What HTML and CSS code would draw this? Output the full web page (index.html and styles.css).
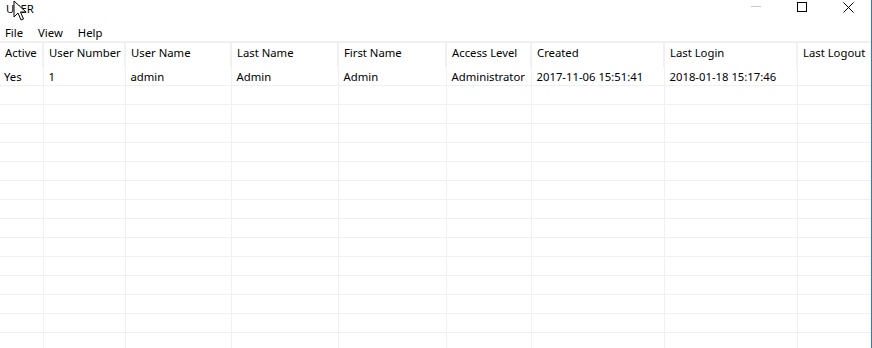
FILE: index.html
```html
<!DOCTYPE html>
<html lang="en">
<head>
  <meta charset="UTF-8" />
  <title>USER</title>
  <link rel="stylesheet" href="styles.css">
</head>
<body>

  <div class="window">
    <!-- title bar -->
    <div class="titlebar">
      <span class="title">USER</span>
      <div class="controls">
        <span class="ctl min"><svg width="10" height="10" viewBox="0 0 10 10"><line x1="0" y1="5.5" x2="10" y2="5.5" stroke="#c8c8c8" stroke-width="1"/></svg></span>
        <span class="ctl max"><svg width="10" height="10" viewBox="0 0 10 10"><rect x="0.5" y="0.5" width="9" height="9" fill="none" stroke="#000" stroke-width="1"/></svg></span>
        <span class="ctl close"><svg width="11" height="11" viewBox="0 0 11 11"><path d="M0.5 0.5 L10.5 10.5 M10.5 0.5 L0.5 10.5" stroke="#000" stroke-width="1"/></svg></span>
      </div>
      <svg class="cursor" width="14" height="22" viewBox="0 0 14 22"><path d="M1 1 L1 17 L5 13 L8 20 L10.5 19 L7.5 12 L13 12 Z" fill="#fff" stroke="#000" stroke-width="1" stroke-linejoin="miter"/></svg>
    </div>

    <!-- menu -->
    <div class="menubar">
      <span>File</span>
      <span>View</span>
      <span>Help</span>
    </div>

    <!-- grid -->
    <div class="grid-wrap">
      <table class="grid">
        <colgroup>
          <col style="width:43px"><col style="width:82px"><col style="width:106px">
          <col style="width:107px"><col style="width:108px"><col style="width:85px">
          <col style="width:133px"><col style="width:133px"><col style="width:74px">
        </colgroup>
        <thead>
          <tr>
            <th>Active</th><th>User Number</th><th>User Name</th><th>Last Name</th>
            <th>First Name</th><th>Access Level</th><th>Created</th><th>Last Login</th><th>Last Logout</th>
          </tr>
        </thead>
        <tbody id="rows">
          <tr>
            <td class="first">Yes</td><td>1</td><td>admin</td><td>Admin</td>
            <td>Admin</td><td>Administrator</td><td>2017-11-06 15:51:41</td><td>2018-01-18 15:17:46</td><td></td>
          </tr>
        </tbody>
      </table>
    </div>
  </div>

  <script>
    const rows = document.getElementById('rows');
    for (let i = 0; i < 14; i++) {
      const tr = document.createElement('tr');
      for (let c = 0; c < 9; c++) {
        tr.appendChild(document.createElement('td'));
      }
      rows.appendChild(tr);
    }
  </script>
</body>
</html>
```

FILE: styles.css
```css
html, body {
  margin: 0;
  padding: 0;
  overflow: hidden;
}
body {
  font-family: "Noto Sans", "Open Sans", sans-serif;
  font-size: 11.3px;
  color: #000;
  background-color: #fff;
}
.window {
  width: 872px;
  height: 348px;
  border-right: 1px solid #2b79d0;
  box-sizing: border-box;
  overflow: hidden;
}
.titlebar {
  position: relative;
  height: 22px;
  display: flex;
  align-items: center;
  justify-content: space-between;
}
.title {
  padding-left: 6px;
  margin-top: -6px;
}
.controls {
  display: flex;
  align-items: flex-start;
  height: 22px;
}
.ctl {
  display: flex;
  justify-content: center;
  width: 46px;
  padding-top: 2px;
}
.ctl.min {
  padding-top: 1px;
}
.ctl.close {
  padding-top: 2px;
}
.cursor {
  position: absolute;
  left: 13px;
  top: 0;
}
.menubar {
  height: 19px;
  display: flex;
  align-items: center;
  padding-left: 5px;
  padding-top: 1px;
  box-sizing: border-box;
  gap: 15px;
}
.grid-wrap {
  border-top: 2px solid #f0f0f0;
}
.grid {
  border-collapse: collapse;
  table-layout: fixed;
  width: 871px;
}
.grid th {
  font-weight: normal;
  text-align: left;
  height: 19px;
  padding: 0 0 5px 5px;
  border-right: 2px solid #f0f0f0;
  white-space: nowrap;
  overflow: hidden;
}
.grid th:last-child {
  border-right: none;
}
.grid td {
  height: 18px;
  padding: 0 0 0 5px;
  border-right: 1px solid #f0f0f0;
  border-bottom: 1px solid #f0f0f0;
  white-space: nowrap;
  overflow: hidden;
}
.grid td.first {
  padding-left: 4px;
}
```
